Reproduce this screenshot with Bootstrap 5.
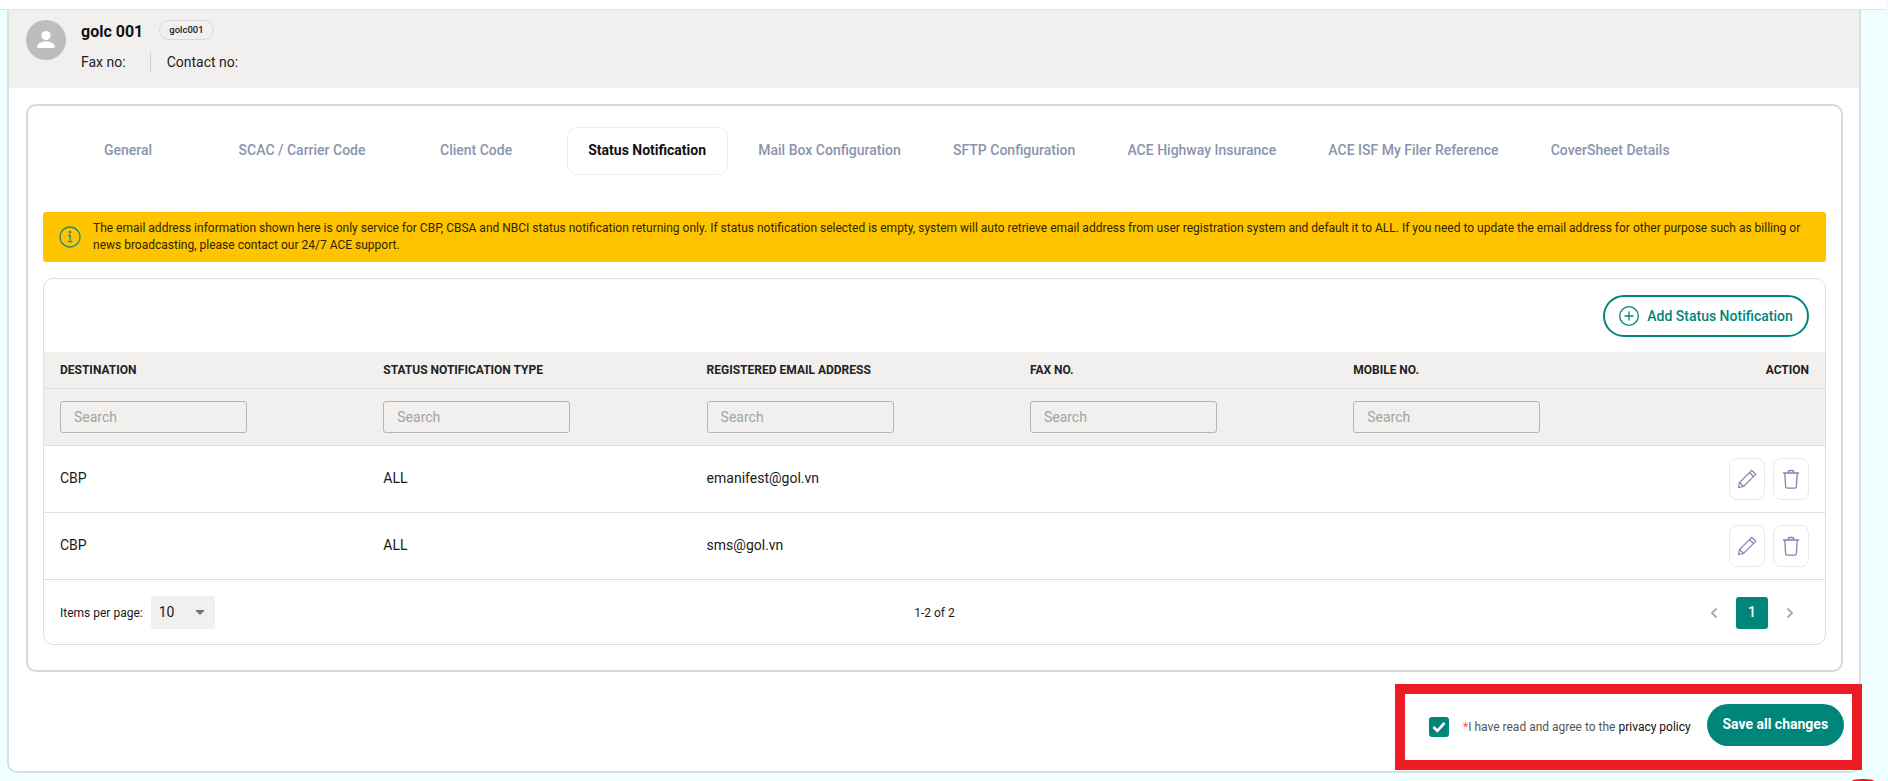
<!DOCTYPE html>
<html lang="en"><head><meta charset="utf-8"><title>Status Notification</title>
<link href="https://cdn.jsdelivr.net/npm/bootstrap@5.3.0/dist/css/bootstrap.min.css" rel="stylesheet">
<style>
html,body{height:781px;overflow:hidden}
body{background:#f0ffff;font-family:Roboto,"Liberation Sans",sans-serif;color:#1a1a1a;font-size:14px;position:relative}
.topgap{height:10px;background:#fff;border-bottom:1px solid #dfe3e3;margin-right:2px}
.shell{margin-left:7px;width:1854px;height:763px;background:#fff;border:solid #d9e0e0;border-width:0 2px 2px 2px;border-radius:0 0 10px 10px}
.profile{height:78px;background:#f1f0ee;padding:10px 17px;gap:15px}
.avatar{width:40px;height:40px;border-radius:50%;background:#bdbdbd}
.pname{font-size:16px;font-weight:700;line-height:20px;color:#111;margin-top:2px}
.chip{font-size:9.5px;font-weight:500;border:1px solid #d9d9d9;border-radius:10px;height:20px;line-height:18px;padding:0 9px;margin-left:16px}
.contacts{margin-top:10px;line-height:20px;font-size:14px;color:#222}
.vdiv{width:1px;height:20px;background:#cfcfcf;margin:0 16px 0 24px}
.panel{margin:16px 16px 0 17px;height:568px;border:2px solid #d0dcdc;border-radius:10px;padding:21px 15px 0 15px}
.tabstrip{padding-left:5px;gap:9px;height:48px}
.tabitem{min-width:160px;padding:0 20.600px;height:48px;line-height:45px;text-align:center;font-weight:500;color:#8a94ad;border:1px solid transparent;border-radius:10px;white-space:nowrap}
.tabitem.on{color:#111;font-weight:700;background:#fff;border-color:#ecedf6;margin-left:1.500px}
.notice{margin-top:37px;height:50px;background:#ffc400;border-radius:3px;padding:0 14px 0 16px;gap:12px;font-size:12px;line-height:17px;color:#2c2500}
.notice p{margin:0}
.tablecard{margin-top:16px;height:367px;border:1px solid #dfe0dc;border-radius:10px;overflow:hidden}
.addrow{height:73px;padding:16px 16px 0 0}
.addbtn{height:42px;width:206px;border:2px solid #00857a;border-radius:21px;color:#00857a;font-weight:500;font-size:14px;gap:8px;background:#fff;padding:0}
.gridtable{table-layout:fixed;width:100%;margin:0;--bs-table-bg:transparent}
.gridtable th,.gridtable td{padding:0 0 0 16px;border-bottom:1px solid #dfdfdf;vertical-align:middle;color:#1a1a1a}
.gridtable thead tr:first-child{height:36px}
.gridtable thead tr:first-child th{font-size:12px;font-weight:700;background:#f1f0ee;color:#222}
.gridtable thead tr:nth-child(2){height:57px}
.gridtable thead tr:nth-child(2) th{background:#f1f0ee}
.gridtable tbody tr{height:67px}
.gridtable .endcell{text-align:right;padding:0 16px 0 0}
.filter{width:187px;height:32px;background:transparent;border:1px solid #b5b5b5;border-radius:3px;padding:0 13px;font-size:14px;font-weight:400;display:block;outline:0}
.filter::placeholder{color:#a3a3a3}
.iconbtn{width:36px;height:42px;border:1px solid #e6e8f5;border-radius:8px;background:#fff;padding:0;gap:0}
.pager{height:66px;padding:0 30px 0 16px;font-size:12px}
.pager>div{flex:1}
.pagecount{padding-left:14px}
.sizebox{width:64px;height:33px;background:#f1f0ee;border-radius:3px;margin-left:8px;padding:0 8px;font-size:14px}
.caret{width:0;height:0;border-left:5px solid transparent;border-right:5px solid transparent;border-top:5px solid #757575;margin-right:2px}
.pagenum{width:32px;height:32px;background:#00857a;color:#fff;border-radius:3px;font-size:14px;font-weight:500}
.pagegroup{gap:17px}
.savebar{margin-top:12px;margin-right:-3px}
.redbox{width:467px;height:86px;border:10px solid #ed1c24;background:#fff;padding:0 6px 0 24px;gap:0}
.tick{width:20px;height:20px;background:#00857a;border-radius:3px}
.agree{font-size:12px;color:#555;margin:0 16px 0 14px;white-space:nowrap}
.agree i{color:#e8603c;font-style:normal}
.agree b{font-weight:400;color:#111}
.savebtn{width:137px;height:42px;border-radius:21px;background:#00857a;color:#fff;font-weight:700;font-size:14px;border:0;padding:0 0 2px;margin-top:-4px}
.fab{position:absolute;left:1852px;top:779px;width:22px;height:2px;border-radius:11px 11px 0 0/2px 2px 0 0;background:#f01018}
</style></head>
<body>
<div class="topgap"></div>
<div class="shell">
  <div class="profile d-flex">
    <div class="avatar d-flex align-items-center justify-content-center flex-shrink-0">
      <svg width="24" height="24" viewBox="0 0 24 24" fill="#fff"><circle cx="12" cy="7.500" r="4.600"/><path d="M3.200 18.800c0-3.600 4.800-5.200 8.800-5.200s8.800 1.600 8.800 5.200c0 .6-.6 1.200-1.200 1.200H4.400c-.6 0-1.200-.6-1.200-1.200z"/></svg>
    </div>
    <div>
      <div class="d-flex align-items-start"><span class="pname">golc 001</span><span class="chip">golc001</span></div>
      <div class="contacts d-flex"><span>Fax no:</span><span class="vdiv"></span><span>Contact no:</span></div>
    </div>
  </div>
  <div class="panel">
    <div class="tabstrip d-flex">
      <div class="tabitem">General</div><div class="tabitem">SCAC / Carrier Code</div><div class="tabitem">Client Code</div><div class="tabitem on">Status Notification</div><div class="tabitem">Mail Box Configuration</div><div class="tabitem">SFTP Configuration</div><div class="tabitem">ACE Highway Insurance</div><div class="tabitem">ACE ISF My Filer Reference</div><div class="tabitem">CoverSheet Details</div>
    </div>
    <div class="notice d-flex align-items-center">
      <svg class="flex-shrink-0" width="22" height="22" viewBox="0 0 22 22" fill="none" stroke="#2a8a70" stroke-width="1.300"><circle cx="11" cy="11" r="10"/><path d="M9 9.500h2.200v6M8.800 15.700h4.500"/><circle cx="11" cy="6.200" r=".7" fill="#2a8a70"/></svg>
      <p>The email address information shown here is only service for CBP, CBSA and NBCI status notification returning only. If status notification selected is empty, system will auto retrieve email address from user registration system and default it to ALL. If you need to update the email address for other purpose such as billing or news broadcasting, please contact our 24/7 ACE support.</p>
    </div>
    <div class="tablecard">
      <div class="addrow d-flex justify-content-end">
        <button class="addbtn btn d-flex align-items-center justify-content-center"><svg width="20" height="20" viewBox="0 0 20 20" fill="none" stroke="#00857a" stroke-width="1.300"><circle cx="10" cy="10" r="9.300"/><path d="M10 5.500v9M5.500 10h9"/></svg>Add Status Notification</button>
      </div>
      <table class="table gridtable">
        <colgroup><col style="width:323.300px"><col style="width:323.300px"><col style="width:323.300px"><col style="width:323.300px"><col style="width:323.300px"><col></colgroup>
        <thead>
          <tr><th>DESTINATION</th><th>STATUS NOTIFICATION TYPE</th><th>REGISTERED EMAIL ADDRESS</th><th>FAX NO.</th><th>MOBILE NO.</th><th class="endcell">ACTION</th></tr>
          <tr><th><input class="filter" placeholder="Search"></th><th><input class="filter" placeholder="Search"></th><th><input class="filter" placeholder="Search"></th><th><input class="filter" placeholder="Search"></th><th><input class="filter" placeholder="Search"></th><th></th></tr>
        </thead>
        <tbody>
          <tr><td>CBP</td><td>ALL</td><td>emanifest@gol.vn</td><td></td><td></td><td class="endcell"><div class="d-flex justify-content-end gap-2">
            <button class="iconbtn btn d-flex align-items-center justify-content-center"><svg width="20" height="20" viewBox="0 0 20 20" fill="none" stroke="#7d86ab" stroke-width="1.200"><path d="M1.500 18.500l1-5L14.700 1.300 18.700 5.300 6.500 17.500z"/><path d="M12.500 3.500l4 4M2.500 13.500l4 4"/></svg></button>
            <button class="iconbtn btn d-flex align-items-center justify-content-center"><svg width="20" height="20" viewBox="0 0 20 20" fill="none" stroke="#7d86ab" stroke-width="1.300"><path d="M2 4h16M3.800 4l.8 13.500c0 1 .7 1.700 1.700 1.700h7.400c1 0 1.700-.7 1.700-1.700L16.200 4M7 3.800C7 2.400 7.700 1.500 9 1.500h2c1.300 0 2 .9 2 2.300"/></svg></button>
          </div></td></tr>
          <tr><td>CBP</td><td>ALL</td><td>sms@gol.vn</td><td></td><td></td><td class="endcell"><div class="d-flex justify-content-end gap-2">
            <button class="iconbtn btn d-flex align-items-center justify-content-center"><svg width="20" height="20" viewBox="0 0 20 20" fill="none" stroke="#7d86ab" stroke-width="1.200"><path d="M1.500 18.500l1-5L14.700 1.300 18.700 5.300 6.500 17.500z"/><path d="M12.500 3.500l4 4M2.500 13.500l4 4"/></svg></button>
            <button class="iconbtn btn d-flex align-items-center justify-content-center"><svg width="20" height="20" viewBox="0 0 20 20" fill="none" stroke="#7d86ab" stroke-width="1.300"><path d="M2 4h16M3.800 4l.8 13.500c0 1 .7 1.700 1.700 1.700h7.400c1 0 1.700-.7 1.700-1.700L16.200 4M7 3.800C7 2.400 7.700 1.500 9 1.500h2c1.300 0 2 .9 2 2.300"/></svg></button>
          </div></td></tr>
        </tbody>
      </table>
      <div class="pager d-flex align-items-center">
        <div class="d-flex align-items-center">Items per page:<span class="sizebox d-flex align-items-center justify-content-between">10<span class="caret"></span></span></div>
        <div class="pagecount text-center">1-2 of 2</div>
        <div class="pagegroup d-flex align-items-center justify-content-end">
          <svg width="10" height="12" viewBox="0 0 10 12" fill="none" stroke="#aaa" stroke-width="1.800"><path d="M7.500 1.500L3 6l4.500 4.500"/></svg>
          <span class="pagenum d-flex align-items-center justify-content-center">1</span>
          <svg width="10" height="12" viewBox="0 0 10 12" fill="none" stroke="#aaa" stroke-width="1.800"><path d="M2.500 1.500L7 6l-4.500 4.500"/></svg>
        </div>
      </div>
    </div>
  </div>
  <div class="savebar d-flex justify-content-end">
    <div class="redbox d-flex align-items-center">
      <span class="tick d-flex align-items-center justify-content-center flex-shrink-0"><svg width="14" height="12" viewBox="0 0 14 12" fill="none" stroke="#fff" stroke-width="2.600"><path d="M1.500 6l3.800 3.800L12.500 2"/></svg></span>
      <span class="agree"><i>*</i>I have read and agree to the <b>privacy policy</b></span>
      <button class="savebtn btn">Save all changes</button>
    </div>
  </div>
</div>
<div class="fab"></div>
<script src="https://cdn.jsdelivr.net/npm/bootstrap@5.3.0/dist/js/bootstrap.bundle.min.js"></script>
</body></html>
